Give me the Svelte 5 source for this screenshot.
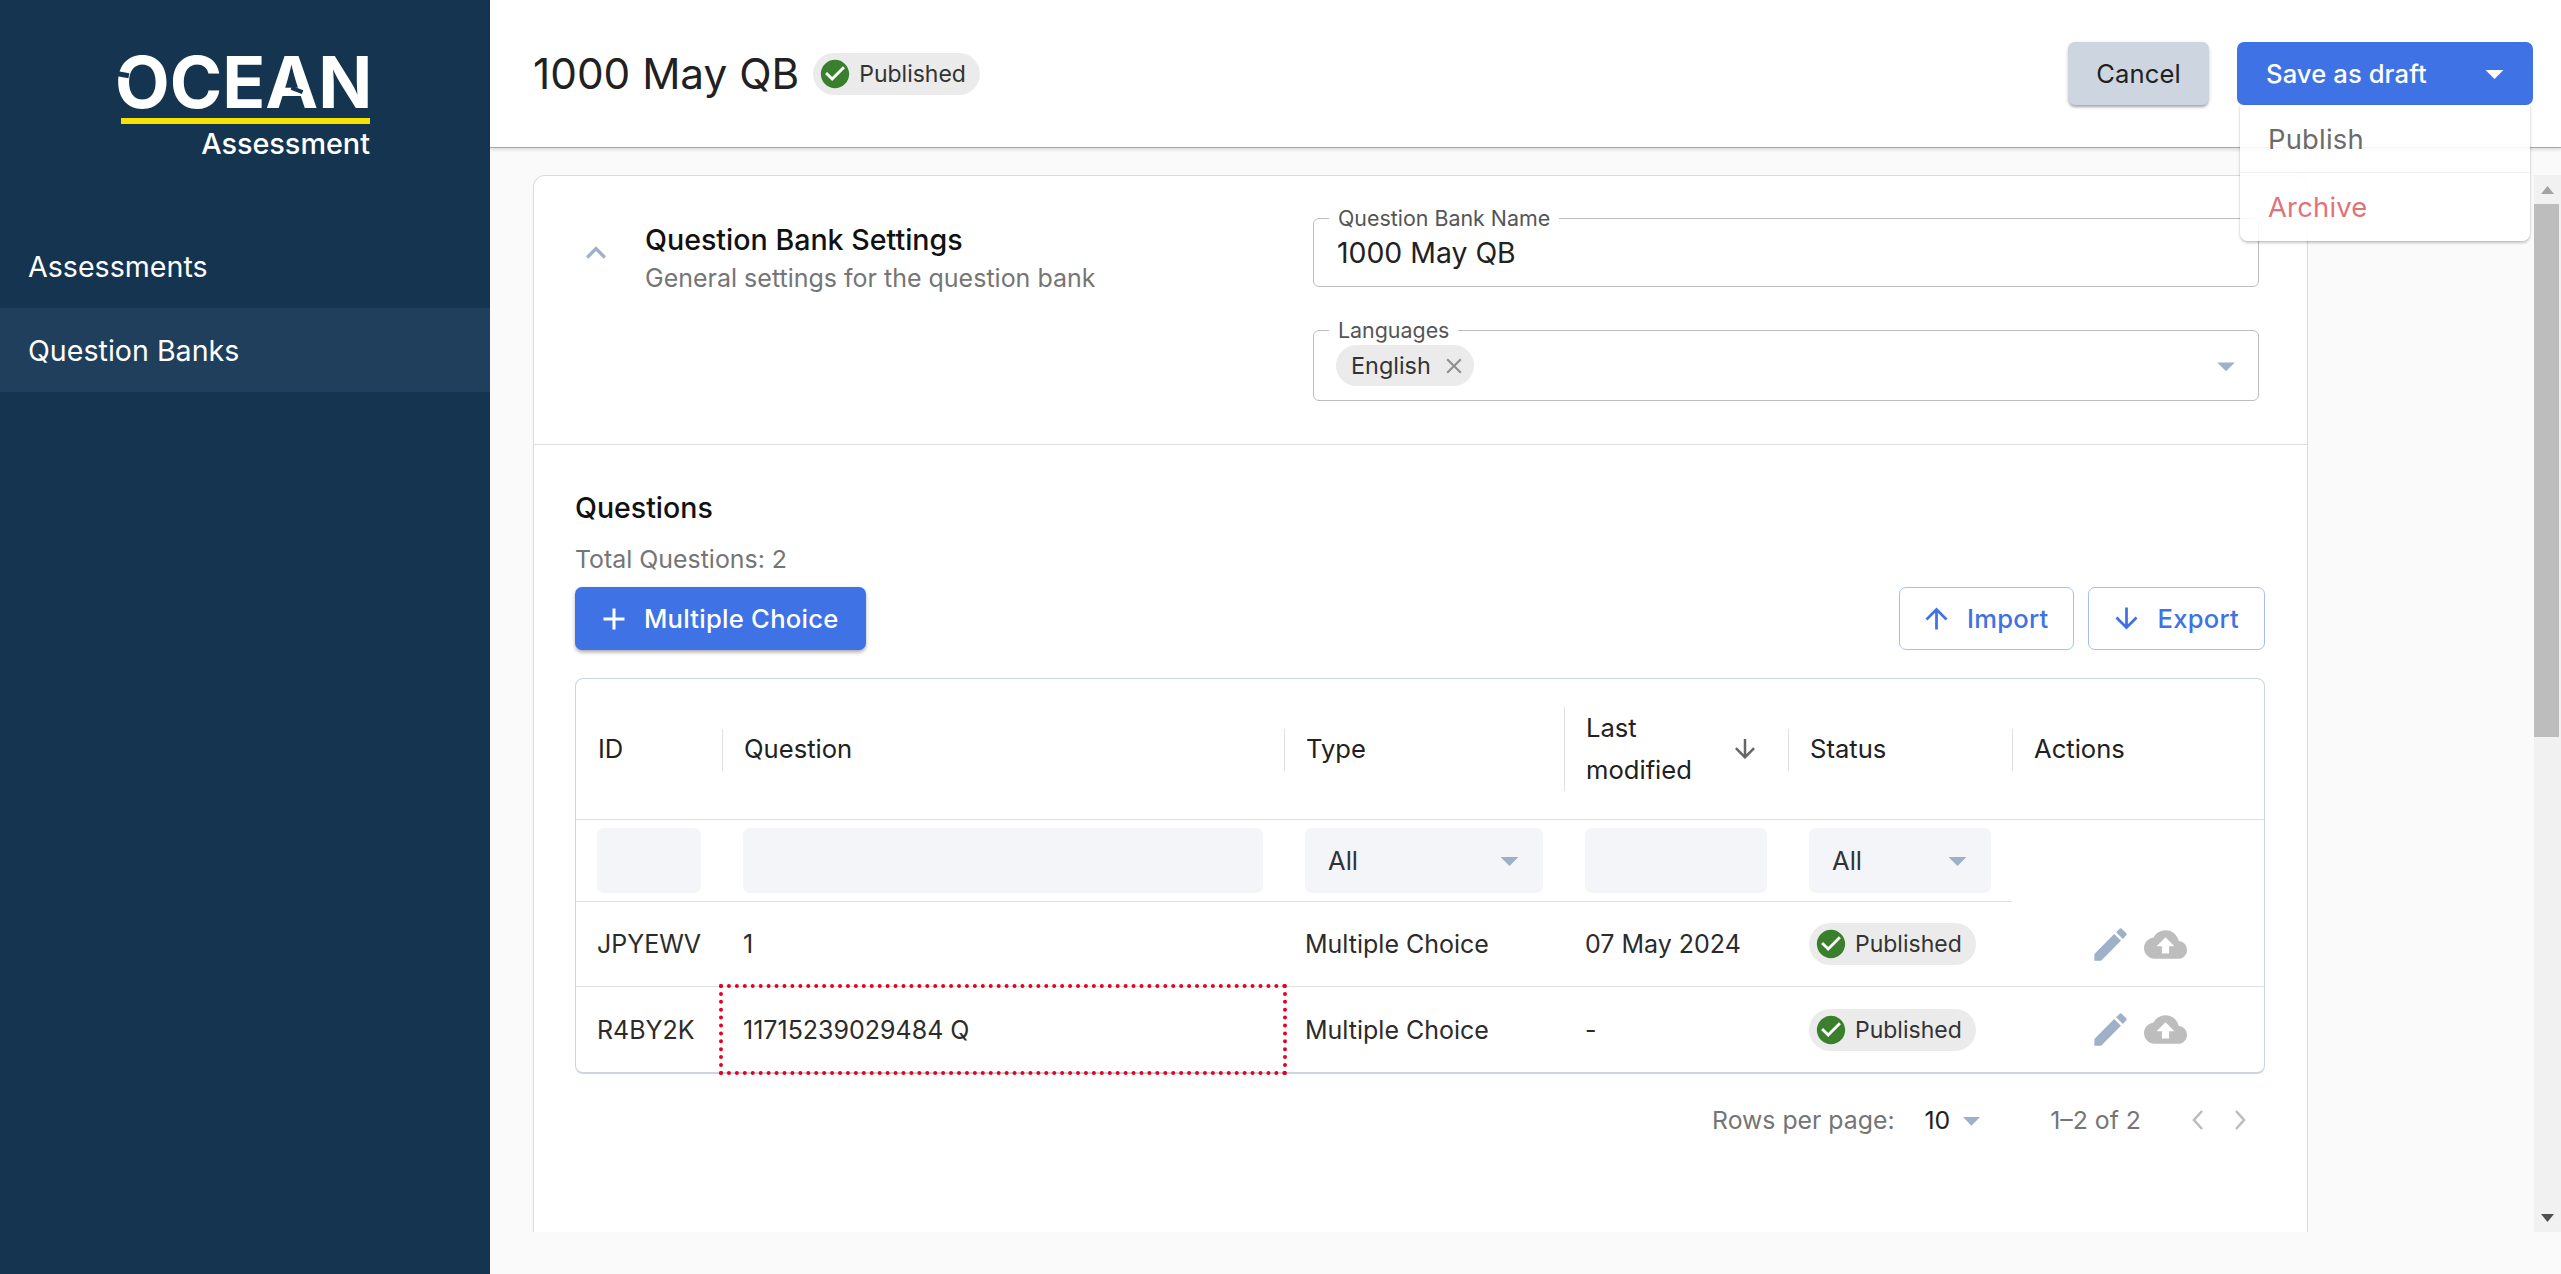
<script>
  const check = "M12 2C6.48 2 2 6.48 2 12s4.48 10 10 10 10-4.48 10-10S17.52 2 12 2zm-2 15l-5-5 1.41-1.41L10 14.17l7.59-7.59L19 8l-9 9z";
  const caret = "M7 10l5 5 5-5z";
  const up = "M4 12l1.41 1.41L11 7.83V20h2V7.83l5.58 5.59L20 12l-8-8-8 8z";
  const down = "M20 12l-1.41-1.41L13 16.17V4h-2v12.17l-5.58-5.59L4 12l8 8 8-8z";
  const pencil = "M3 17.25V21h3.75L17.81 9.94l-3.75-3.75L3 17.25zM20.71 7.04c.39-.39.39-1.02 0-1.41l-2.34-2.34c-.39-.39-1.02-.39-1.41 0l-1.83 1.83 3.75 3.75 1.83-1.83z";
  const cloud = "M19.35 10.04C18.67 6.59 15.64 4 12 4 9.11 4 6.6 5.64 5.35 8.04 2.34 8.36 0 10.91 0 14c0 3.31 2.69 6 6 6h13c2.76 0 5-2.24 5-5 0-2.64-2.05-4.78-4.65-4.96zM14 13v4h-4v-4H7l5-5 5 5h-3z";
  const rows = [
    { id: "JPYEWV", q: "1", type: "Multiple Choice", date: "07 May 2024", focus: false },
    { id: "R4BY2K", q: "11715239029484 Q", type: "Multiple Choice", date: "-", focus: true }
  ];
</script>

{#snippet icon(d, cls)}
  <svg class={cls} viewBox="0 0 24 24" aria-hidden="true"><path {d} /></svg>
{/snippet}

{#snippet published()}
  <span class="chip">
    <span class="chip-ic">{@render icon(check, "check")}</span>
    <span>Published</span>
  </span>
{/snippet}

<div class="page">
  <aside class="side">
    <div class="logo">
      <div class="ocean">OCEAN<i class="notch-o"></i><i class="notch-a"></i></div>
      <div class="bar"></div>
      <div class="assess">Assessment</div>
    </div>
    <nav class="nav">
      <div class="nav-item">Assessments</div>
      <div class="nav-item active">Question Banks</div>
    </nav>
  </aside>

  <div class="main">
    <header class="top">
      <h1>1000 May QB</h1>
      {@render published()}
      <div class="spacer"></div>
      <button class="btn cancel">Cancel</button>
      <div class="save-wrap">
        <button class="btn save"><span>Save as draft</span>{@render icon(caret, "save-caret")}</button>
        <div class="menu">
          <div class="menu-item pub">Publish</div>
          <div class="menu-item arch">Archive</div>
        </div>
      </div>
    </header>

    <div class="scroll">
      <div class="scroll-inner">
        <section class="card">
          <div class="settings">
            <div class="collapse">{@render icon("M12 8l-6 6 1.41 1.41L12 10.83l4.59 4.58L18 14z", "chev")}</div>
            <div class="set-head">
              <div class="set-title">Question Bank Settings</div>
              <div class="set-sub">General settings for the question bank</div>
            </div>
            <div class="fields">
              <div class="field name">
                <span class="flabel">Question Bank Name</span>
                <span>1000 May QB</span>
              </div>
              <div class="field lang">
                <span class="flabel">Languages</span>
                <span class="lang-chip">English
                  <svg class="x" viewBox="0 0 24 24"><path d="M19 6.41 17.59 5 12 10.59 6.41 5 5 6.41 10.59 12 5 17.59 6.41 19 12 13.41 17.59 19 19 17.59 13.41 12z" /></svg>
                </span>
                {@render icon(caret, "lang-caret")}
              </div>
            </div>
          </div>

          <div class="questions">
            <div class="q-title">Questions</div>
            <div class="q-total">Total Questions: 2</div>
            <div class="toolbar">
              <button class="btn add">
                <svg class="plus" viewBox="0 0 24 24"><path d="M19 13h-6v6h-2v-6H5v-2h6V5h2v6h6v2z" /></svg>
                <span>Multiple Choice</span>
              </button>
              <div class="spacer"></div>
              <button class="btn outline">{@render icon(up, "arrow")}Import</button>
              <button class="btn outline">{@render icon(down, "arrow")}Export</button>
            </div>

            <div class="table">
              <div class="grid head">
                <div class="th"><span>ID</span></div>
                <div class="th sep"><span>Question</span></div>
                <div class="th sep"><span>Type</span></div>
                <div class="th sep tall"><span>Last<br />modified</span>{@render icon(down, "sort")}</div>
                <div class="th sep"><span>Status</span></div>
                <div class="th sep"><span>Actions</span></div>
              </div>
              <div class="grid filters">
                <div class="fc"><div class="finput"></div></div>
                <div class="fc"><div class="finput"></div></div>
                <div class="fc"><div class="finput sel">All{@render icon(caret, "fcaret")}</div></div>
                <div class="fc"><div class="finput"></div></div>
                <div class="fc"><div class="finput sel">All{@render icon(caret, "fcaret")}</div></div>
                <div class="fc none"></div>
              </div>
              {#each rows as r}
                <div class="grid row">
                  <div class="td">{r.id}</div>
                  <div class="td" class:focus={r.focus}>{r.q}</div>
                  <div class="td">{r.type}</div>
                  <div class="td">{r.date}</div>
                  <div class="td">{@render published()}</div>
                  <div class="td acts">
                    {@render icon(pencil, "pencil")}
                    {@render icon(cloud, "cloud")}
                  </div>
                </div>
              {/each}
            </div>

            <div class="pager">
              <span class="muted">Rows per page:</span>
              <span class="size">10</span>
              {@render icon(caret, "pcaret")}
              <span class="muted range">1–2 of 2</span>
              <svg class="pg prev" viewBox="0 0 14 24"><path d="M11 3 3 12l8 9" /></svg>
              <svg class="pg" viewBox="0 0 14 24"><path d="M3 3l8 9-8 9" /></svg>
            </div>
          </div>
        </section>
      </div>

      <div class="sbar">
        <div class="sb-arrow"><svg viewBox="0 0 10 6"><path d="M5 0l5 6H0z" /></svg></div>
        <div class="thumb"></div>
        <div class="sb-fill"></div>
        <div class="sb-arrow dn"><svg viewBox="0 0 10 6"><path d="M0 0h10L5 6z" /></svg></div>
      </div>
    </div>
  </div>
</div>

<style>
  :global(body) {
    margin: 0;
    background: #fafafa;
    font-family: Inter, "Liberation Sans", sans-serif;
    color: #212121;
  }
  svg { display: block; fill: currentColor; flex: none; }
  button { font-family: inherit; }
  .page { display: flex; width: 2561px; height: 1274px; overflow: hidden; }
  .spacer { flex: 1; }

  .side { width: 490px; flex: none; background: #143450; color: #fff; }
  .logo { width: 251px; margin-left: 119px; padding-top: 57px; height: 167px; box-sizing: border-box; display: flex; flex-direction: column; align-items: flex-end; }
  .ocean { position: relative; font-size: 71px; line-height: 51px; height: 51px; font-weight: 700; letter-spacing: 0; width: 251px; text-indent: -4px; white-space: nowrap; }
  .notch-o { position: absolute; left: -4px; top: 15px; width: 14px; height: 5px; background: #143450; transform: rotate(10deg); }
  .notch-a { position: absolute; left: 172px; top: 31px; width: 12px; height: 4px; background: #143450; transform: rotate(20deg); }
  .bar { width: 249px; height: 6px; background: #f7e100; margin-top: 10px; }
  .assess { font-size: 28.8px; line-height: 30px; font-weight: 500; margin-top: 5px; }
  .nav { margin-top: 57px; }
  .nav-item { height: 84px; padding-left: 28px; display: flex; align-items: center; font-size: 28.6px; }
  .nav-item.active { background: #1f3f5c; }

  .main { flex: 1; min-width: 0; display: flex; flex-direction: column; }
  .top { flex: none; background: #fff; display: flex; align-items: center; padding: 0 28px 0 43px; box-sizing: border-box; border-bottom: 1px solid #a8a8a8; box-shadow: 0 2px 3px rgba(0,0,0,.12); position: relative; z-index: 2; height: 148px; }
  h1 { margin: 0 14px 0 0; font-size: 42.3px; font-weight: 400; color: #212121; white-space: nowrap; }
  .chip { display: inline-flex; align-items: center; height: 42px; background: #ebebeb; border-radius: 21px; padding: 0 14px 0 8px; gap: 10px; font-size: 23px; color: #333; }
  .chip-ic { width: 28px; height: 28px; border-radius: 50%; background: #fff; display: block; position: relative; }
  .check { width: 34px; height: 34px; color: #3a7f2b; margin: -3px; }

  .btn { border: 0; display: inline-flex; align-items: center; font-size: 25.6px; letter-spacing: .25px; cursor: pointer; height: 63px; box-sizing: border-box; border-radius: 7px; white-space: nowrap; }
  .cancel { width: 141px; justify-content: center; background: #cdd5e1; color: #212121; margin-right: 28px; letter-spacing: .1px; box-shadow: 0 3px 3px -1px rgba(0,0,0,.3), 0 1px 4px rgba(0,0,0,.12); }
  .save-wrap { position: relative; }
  .save { width: 296px; background: #3f72e4; color: #fff; padding: 0 17px 0 29px; font-weight: 500; letter-spacing: .1px; justify-content: space-between; }
  .save-caret { width: 43px; height: 43px; }
  .menu { position: absolute; top: 100%; left: 3px; right: 3px; background: rgba(255,255,255,.88); border-radius: 0 0 8px 8px; box-shadow: 0 2px 3px rgba(0,0,0,.22), 0 0 2px rgba(0,0,0,.08); }
  .menu-item { height: 67px; display: flex; align-items: center; padding-left: 28px; font-size: 27.4px; letter-spacing: .2px; }
  .menu-item.arch { height: 69px; border-top: 1px solid rgba(0,0,0,.06); box-sizing: border-box; }
  .pub { color: #6b6b6b; }
  .arch { color: #df7378; }

  .scroll { height: 1084px; flex: none; display: flex; background: #fafafa; }
  .scroll-inner { flex: 1; min-width: 0; overflow: hidden; padding: 27px 226px 0 43px; }
  .card { background: #fff; border: 1px solid #d6dce6; border-bottom: 0; border-radius: 12px 12px 0 0; height: 1100px; box-sizing: border-box; }

  .settings { display: flex; height: 269px; box-sizing: border-box; border-bottom: 1px solid #e0e0e0; }
  .collapse { width: 111px; flex: none; padding: 57px 0 0 42px; box-sizing: border-box; }
  .chev { width: 40px; height: 40px; color: #9fb0c9; }
  .set-head { width: 668px; flex: none; padding-top: 43px; box-sizing: border-box; }
  .set-title { font-size: 28.6px; font-weight: 450; color: #111; line-height: 42px; }
  .set-sub { font-size: 25px; color: #757575; line-height: 34px; }
  .fields { width: 946px; padding-top: 42px; display: flex; flex-direction: column; gap: 43px; }
  .field { position: relative; border: 1px solid #bdbdbd; border-radius: 6px; display: flex; align-items: center; padding-left: 23px; font-size: 28.4px; color: #212121; box-sizing: border-box; }
  .field.name { height: 69px; }
  .field.lang { height: 71px; padding-left: 22px; justify-content: space-between; }
  .flabel { position: absolute; left: 15px; top: -12px; background: #fff; padding: 0 9px; font-size: 21.4px; line-height: 22px; color: #555; }
  .lang-chip { display: inline-flex; align-items: center; height: 41px; background: #ebebeb; border-radius: 21px; padding: 0 7px 0 15px; gap: 10px; font-size: 23.4px; color: #333; }
  .x { width: 26px; height: 26px; color: #8f8f8f; }
  .lang-caret { width: 42px; height: 42px; color: #9fb0c9; margin-right: 11px; }

  .questions { padding: 43px 42px 0 41px; }
  .q-title { font-size: 28.5px; font-weight: 450; color: #111; line-height: 40px; }
  .q-total { font-size: 24.9px; color: #757575; line-height: 34px; margin-top: 14px; }
  .toolbar { display: flex; gap: 14px; margin-top: 11px; }
  .add { background: #3f72e4; color: #fff; font-weight: 500; padding: 0 0 0 21px; gap: 12px; box-shadow: 0 3px 4px -1px rgba(0,0,0,.3), 0 1px 5px rgba(0,0,0,.12); width: 291px; }
  .plus { width: 36px; height: 36px; }
  .outline { background: #fff; color: #3f72e4; border: 1px solid #a9bdf0; padding: 0 25px 0 20px; gap: 14px; font-weight: 500; }
  .outline + .outline { padding-left: 21px; }
  .arrow { width: 33px; height: 33px; }

  .table { margin-top: 28px; border: 1px solid #ccd5e3; border-bottom: 2px solid #ccd5e3; border-radius: 8px; }
  .grid { display: grid; grid-template-columns: 146px 562px 280px 224px 224px 1fr; }
  .head { height: 140px; border-bottom: 1px solid #e0e0e0; }
  .th { position: relative; display: flex; align-items: center; padding-left: 22px; font-size: 25.6px; font-weight: 400; color: #212121; line-height: 42px; }
  .th.sep::before { content: ""; position: absolute; left: 0; top: 50px; height: 42px; width: 1px; background: #e0e0e0; }
  .th.tall::before { top: 28px; height: 84px; }
  .sort { width: 30px; height: 30px; color: #666; position: absolute; left: 166px; top: 55px; }
  .filters { height: 82px; }
  .fc { border-bottom: 1px solid #e0e0e0; padding: 8px 21px 0 21px; }
  .fc.none { border-bottom: 0; }
  .finput { height: 65px; background: #f4f5f9; border-radius: 7px; display: flex; align-items: center; justify-content: space-between; box-sizing: border-box; font-size: 25.6px; color: #333; }
  .finput.sel { padding: 0 12px 0 23px; }
  .fcaret { width: 43px; height: 43px; color: #9fb0c9; }
  .row { height: 85px; border-bottom: 1px solid #e0e0e0; box-sizing: border-box; }
  .row:last-child { border-bottom: 0; height: 85px; }
  .td { display: flex; align-items: center; padding-left: 21px; font-size: 25px; color: #2b2b2b; white-space: nowrap; }
  .td .chip { height: 42px; }
  .focus { outline: 4px dotted #e8001c; outline-offset: -1px; }
  .acts { padding-left: 77px; gap: 12px; }
  .pencil { width: 43px; height: 43px; color: #9fb0c9; }
  .cloud { width: 43px; height: 43px; color: #bdbdbd; }

  .pager { display: flex; align-items: center; justify-content: flex-end; height: 92px; font-size: 24.8px; padding-right: 18px; }
  .muted { color: #757575; }
  .size { margin-left: 30px; color: #212121; }
  .pcaret { width: 41px; height: 41px; color: #9fb0c9; margin-left: 1px; }
  .range { margin-left: 58px; }
  .pg { width: 14px; height: 24px; fill: none; stroke: #bdbdbd; stroke-width: 2.6; margin-left: 28px; }
  .pg.prev { margin-left: 50px; }

  .sbar { width: 27px; flex: none; margin-top: 27px; background: #f1f1f1; display: flex; flex-direction: column; }
  .sb-arrow { height: 29px; display: flex; align-items: center; justify-content: center; color: #a3a3a3; }
  .sb-arrow svg { width: 13px; height: 8px; }
  .sb-arrow.dn { color: #505050; }
  .thumb { height: 533px; background: #bdbdbd; margin-right: 2px; }
  .sb-fill { flex: 1; }
</style>
